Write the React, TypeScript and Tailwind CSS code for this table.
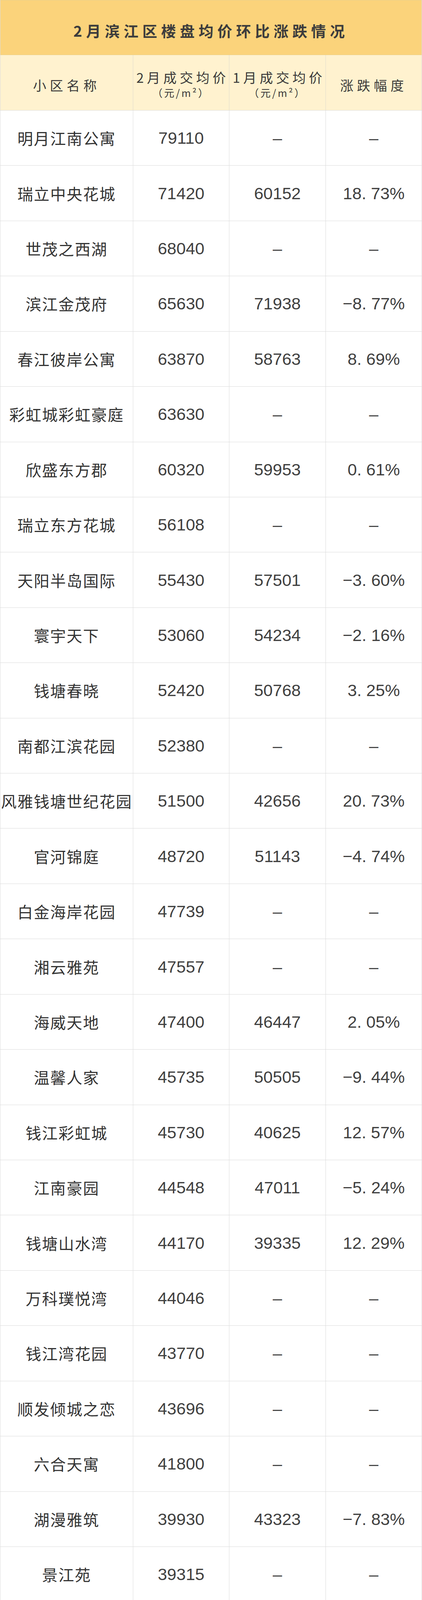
import React from 'react';

type Row = [string, string, string, string];

const rows: Row[] = [
  ['明月江南公寓', '79110', '–', '–'],
  ['瑞立中央花城', '71420', '60152', '18. 73%'],
  ['世茂之西湖', '68040', '–', '–'],
  ['滨江金茂府', '65630', '71938', '−8. 77%'],
  ['春江彼岸公寓', '63870', '58763', '8. 69%'],
  ['彩虹城彩虹豪庭', '63630', '–', '–'],
  ['欣盛东方郡', '60320', '59953', '0. 61%'],
  ['瑞立东方花城', '56108', '–', '–'],
  ['天阳半岛国际', '55430', '57501', '−3. 60%'],
  ['寰宇天下', '53060', '54234', '−2. 16%'],
  ['钱塘春晓', '52420', '50768', '3. 25%'],
  ['南都江滨花园', '52380', '–', '–'],
  ['风雅钱塘世纪花园', '51500', '42656', '20. 73%'],
  ['官河锦庭', '48720', '51143', '−4. 74%'],
  ['白金海岸花园', '47739', '–', '–'],
  ['湘云雅苑', '47557', '–', '–'],
  ['海威天地', '47400', '46447', '2. 05%'],
  ['温馨人家', '45735', '50505', '−9. 44%'],
  ['钱江彩虹城', '45730', '40625', '12. 57%'],
  ['江南豪园', '44548', '47011', '−5. 24%'],
  ['钱塘山水湾', '44170', '39335', '12. 29%'],
  ['万科璞悦湾', '44046', '–', '–'],
  ['钱江湾花园', '43770', '–', '–'],
  ['顺发倾城之恋', '43696', '–', '–'],
  ['六合天寓', '41800', '–', '–'],
  ['湖漫雅筑', '39930', '43323', '−7. 83%'],
  ['景江苑', '39315', '–', '–'],
  ['盛庐', '39194', '39214', '−0. 05%'],
  ['银爵世纪公寓', '36987', '31423', '17. 71%'],
  ['银色港湾公寓', '36866', '40960', '−10. 00%'],
  ['南岸晶都花园', '34681', '32379', '7. 11%'],
  ['中赢云际', '34225', '–', '–'],
  ['白马湖壹号', '34170', '40912', '−16. 48%'],
  ['保亿风景蝶院', '32000', '35362', '−9. 51%'],
  ['铁岭花园', '31627', '–', '–'],
  ['金盛曼城', '29428', '35945', '−18. 13%'],
  ['滨文苑', '29250', '–', '–'],
  ['星耀城', '29240', '28656', '2. 04%'],
  ['古塘路小区', '29090', '–', '–'],
  ['滨兴小区', '28333', '–', '–'],
  ['兴盛花园', '26690', '24542', '8. 75%'],
  ['迎春南苑', '26574', '–', '–'],
  ['滨康小区', '25869', '–', '–'],
];

const cjk = "font-['Noto_Sans_CJK_SC','Noto_Sans',sans-serif]";
const num = "font-['Liberation_Sans_Narrow','Liberation_Sans',sans-serif]";

export default function App() {
  return (
    <div className="w-[1080px] h-[6364px] overflow-hidden flex flex-col bg-white text-[#3a3a3a] border-l border-r border-[#dcdcdc]">
      {/* title band */}
      <div
        className={`h-[141px] shrink-0 bg-[#fbd37b] border-t border-b border-[#ead08c] flex items-center justify-center pt-[14px] ${cjk}`}
      >
        <h1 className="text-[38px] leading-[50px] font-bold tracking-[10px] text-[#3c3c3c] whitespace-nowrap">
          2月滨江区楼盘均价环比涨跌情况
        </h1>
      </div>

      {/* header row */}
      <div
        className={`grid grid-cols-[340px_246px_247px_1fr] h-[142px] shrink-0 bg-[#fff2cf] border-b border-[#dcdcdc] ${cjk}`}
      >
        <div className="flex items-center justify-center pt-[12px] border-r border-[#e0dccd] text-[34px] leading-[44px] tracking-[9px] whitespace-nowrap">
          小区名称
        </div>
        <div className="flex flex-col items-center justify-center pt-[10px] border-r border-[#e0dccd] whitespace-nowrap">
          <span className="text-[34px] leading-[40px] tracking-[8px] pl-[8px]">2月成交均价</span>
          <span className="text-[26px] leading-[38px] tracking-[4px]">（元/m²）</span>
        </div>
        <div className="flex flex-col items-center justify-center pt-[10px] border-r border-[#e0dccd] whitespace-nowrap">
          <span className="text-[34px] leading-[40px] tracking-[8px] pl-[8px]">1月成交均价</span>
          <span className="text-[26px] leading-[38px] tracking-[4px]">（元/m²）</span>
        </div>
        <div className="flex items-center justify-center pt-[12px] text-[34px] leading-[44px] tracking-[9px] whitespace-nowrap">
          涨跌幅度
        </div>
      </div>

      {/* data rows */}
      {rows.map(([name, feb, jan, change]) => (
        <div
          key={name}
          className="grid grid-cols-[340px_246px_247px_1fr] flex-1 min-h-0 border-b border-[#dcdcdc]"
        >
          <div
            className={`flex items-center justify-center border-r border-[#dcdcdc] text-[40px] leading-[48px] tracking-[2px] whitespace-nowrap text-[#333333] ${cjk}`}
          >
            {name}
          </div>
          <div
            className={`flex items-center justify-center border-r border-[#dcdcdc] text-[43px] leading-[48px] text-[#404040] ${num}`}
          >
            {feb}
          </div>
          <div
            className={`flex items-center justify-center border-r border-[#dcdcdc] text-[43px] leading-[48px] text-[#404040] ${num}`}
          >
            {jan}
          </div>
          <div
            className={`flex items-center justify-center text-[43px] leading-[48px] text-[#404040] whitespace-nowrap ${num}`}
          >
            {change}
          </div>
        </div>
      ))}
    </div>
  );
}
